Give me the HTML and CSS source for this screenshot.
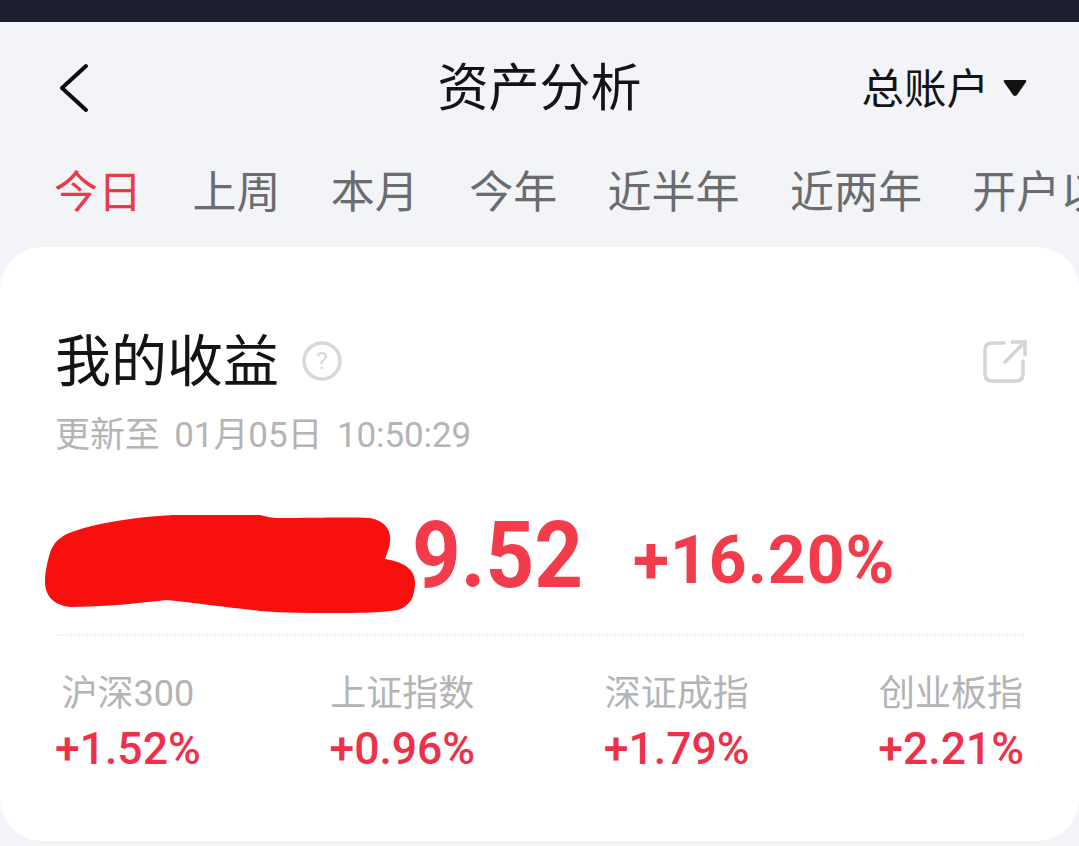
FILE: index.html
```html
<!DOCTYPE html>
<html lang="zh-CN">
<head>
    <meta charset="UTF-8">
    <title>资产分析</title>
    <link rel="stylesheet" href="styles.css">
</head>
<body>
    <div class="status-bar"></div>

    <div class="nav-bar">
        <svg class="back-icon" width="32" height="50" viewBox="0 0 32 50">
            <path d="M28 3 L4 25 L28 47" fill="none" stroke="#0c0c0e" stroke-width="4" stroke-linecap="round" stroke-linejoin="round"/>
        </svg>
        <h1 class="nav-title">资产分析</h1>
        <div class="account">
            <span>总账户</span>
            <svg class="caret" width="26" height="20" viewBox="0 0 26 20">
                <path d="M3 2 H23 Q25 2 24 4 L15 17 Q13 19 11 17 L2 4 Q1 2 3 2 Z" fill="#111"/>
            </svg>
        </div>
    </div>

    <div class="tabs">
        <span class="tab active">今日</span>
        <span class="tab">上周</span>
        <span class="tab">本月</span>
        <span class="tab">今年</span>
        <span class="tab">近半年</span>
        <span class="tab">近两年</span>
        <span class="tab">开户以来</span>
    </div>

    <div class="card">
        <div class="card-head">
            <h2 class="card-title">我的收益</h2>
            <svg class="help-icon" width="40" height="40" viewBox="0 0 40 40">
                <circle cx="20" cy="20" r="18" fill="none" stroke="#d8d8d8" stroke-width="3.5"/>
                <text x="20" y="28" text-anchor="middle" class="help-mark">?</text>
            </svg>
            <svg class="share-icon" width="44" height="44" viewBox="0 0 44 44">
                <path d="M21 4 H9 Q2 4 2 11 V35 Q2 42 9 42 H33 Q40 42 40 35 V22" fill="none" stroke="#d4d4d4" stroke-width="3.5" stroke-linecap="round"/>
                <path d="M21 24 L41 4 M28 3 H42 V17" fill="none" stroke="#d4d4d4" stroke-width="3.5"/>
            </svg>
        </div>
        <div class="updated">更新至 01月05日 10:50:29</div>

        <div class="profit">
            <span class="profit-value">9.52</span>
            <span class="profit-rate">+16.20%</span>
            <svg class="scribble" width="370" height="98" viewBox="0 0 370 98">
                <path d="M0 67 C0 55 3 45 5 38 C8 28 15 22 24 18 C50 8 90 2 128 0 C160 -1 190 0 215 0 C222 2 228 3 232 3 C270 3 300 2 325 3 C340 6 346 15 345 25 C345 32 342 38 340 44 C362 47 370 57 370 67 C370 82 365 91 353 95 C335 98 310 98 290 98 C265 98 240 98 215 96 C180 92 150 88 121 85 C95 88 60 92 25 92 C8 90 0 80 0 67 Z" fill="#f8100f"/>
            </svg>
        </div>

        <div class="divider"></div>

        <div class="indexes">
            <div class="index-item">
                <div class="index-name">沪深300</div>
                <div class="index-rate">+1.52%</div>
            </div>
            <div class="index-item">
                <div class="index-name">上证指数</div>
                <div class="index-rate">+0.96%</div>
            </div>
            <div class="index-item">
                <div class="index-name">深证成指</div>
                <div class="index-rate">+1.79%</div>
            </div>
            <div class="index-item">
                <div class="index-name">创业板指</div>
                <div class="index-rate">+2.21%</div>
            </div>
        </div>
    </div>
</body>
</html>
```

FILE: styles.css
```css
html, body {
    margin: 0;
    padding: 0;
}

body {
    width: 1079px;
    height: 846px;
    overflow: hidden;
    background-color: #f2f4f8;
    font-family: "Noto Sans CJK SC", "Noto Sans", sans-serif;
}

.status-bar {
    height: 22px;
    background-color: #1c1f2d;
}

.nav-bar {
    position: relative;
    display: flex;
    align-items: center;
    justify-content: space-between;
    height: 128px;
    padding: 0 51px 0 58px;
}

.back-icon {
    margin-top: 4px;
}

.nav-title {
    position: absolute;
    left: 0;
    right: 0;
    margin: 0;
    padding-bottom: 5px;
    text-align: center;
    font-size: 51px;
    font-weight: 400;
    color: #141416;
}

.account {
    display: flex;
    align-items: center;
    gap: 13px;
    padding-bottom: 2px;
    font-size: 42.5px;
    color: #141416;
}

.caret {
    margin-top: 5px;
}

.tabs {
    display: flex;
    gap: 50.4px;
    height: 97px;
    padding-left: 54px;
    font-size: 44px;
    line-height: 78px;
    white-space: nowrap;
    overflow: hidden;
    color: #6b6c70;
}

.tab.active {
    color: #ea3a47;
}

.card {
    height: 594px;
    box-sizing: border-box;
    padding: 0 55px;
    background-color: #fff;
    border-radius: 42px;
}

.card-head {
    display: flex;
    align-items: center;
    height: 72px;
    padding-top: 78px;
}

.card-title {
    margin: -9px 0 0;
    font-size: 56px;
    font-weight: 400;
    color: #141416;
}

.help-icon {
    margin-left: 23px;
}

.help-mark {
    font-family: "Roboto", sans-serif;
    font-size: 24px;
    fill: #d8d8d8;
}

.share-icon {
    margin-left: auto;
    margin-right: -3px;
}

.updated {
    margin-top: 14px;
    font-family: "Roboto", "Noto Sans CJK SC", sans-serif;
    font-size: 35px;
    line-height: 50px;
    letter-spacing: -0.1px;
    word-spacing: 6px;
    color: #b4b4b6;
}

.profit {
    position: relative;
    display: flex;
    align-items: baseline;
    gap: 50px;
    height: 139px;
    padding-left: 357px;
    margin-top: 34px;
    font-family: "Roboto", sans-serif;
    font-weight: 700;
    color: #f23c4c;
    line-height: 126px;
}

/* the original digits are narrower and taller than Roboto */
.profit-value {
    display: inline-block;
    font-size: 85px;
    transform: scaleY(1.09);
    transform-origin: 0 75%;
}

.profit-rate {
    position: relative;
    top: -4px;
    font-size: 66px;
    letter-spacing: 1px;
}

.scribble {
    position: absolute;
    left: -10px;
    top: 20px;
}

.divider {
    border-top: 2px dotted #efefef;
}

.indexes {
    display: flex;
    justify-content: space-between;
    margin-top: 33px;
}

.index-item {
    text-align: center;
}

.index-name {
    font-family: "Roboto", "Noto Sans CJK SC", sans-serif;
    font-size: 36px;
    line-height: 50px;
    color: #b4b4b6;
}

.index-rate {
    margin-top: 5px;
    font-family: "Roboto", sans-serif;
    font-size: 44.5px;
    font-weight: 500;
    line-height: 50px;
    color: #ee3048;
}
```
